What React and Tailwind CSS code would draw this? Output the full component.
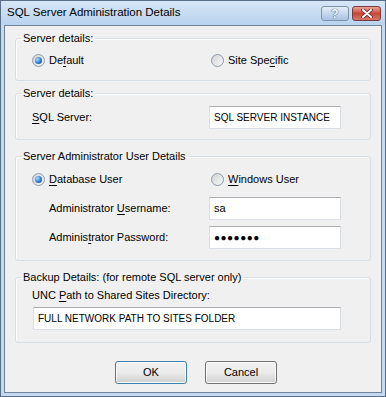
import React from "react";

const font = { fontFamily: "'Liberation Sans', Arial, sans-serif" };

// Vista-style radio button
const Radio = ({ checked }) => (
  <span className="relative inline-flex w-[13px] h-[13px] rounded-full border border-[#8d9aa8] bg-gradient-to-br from-[#d0d4d9] to-[#f7f7f7] items-center justify-center shrink-0">
    {checked && (
      <span className="w-[7px] h-[7px] rounded-full bg-[radial-gradient(circle_at_35%_35%,#b4dcff,#2a7ad4_55%,#0b3c8a)]" />
    )}
  </span>
);

const Key = ({ children }) => <span className="underline underline-offset-[2px]">{children}</span>;

const Field = ({ value, className = "" }) => (
  <div className={`h-[23px] shrink-0 overflow-hidden whitespace-nowrap bg-white border border-[#dadfe5] border-t-[#abadb3] flex items-center pl-[4px] text-black ${className}`}>
    {value}
  </div>
);

const Group = ({ label, className = "", children }) => (
  <fieldset className={`mx-[10px] border border-[#d5dfe5] rounded-[3px] shadow-[inset_1px_1px_0_#ffffff] ${className}`}>
    <legend className="ml-[5px] px-[2px] leading-[16px] text-black">{label}</legend>
    {children}
  </fieldset>
);

const Button = ({ children, focused }) => (
  <button
    className={`w-[72px] h-[23px] rounded-[3px] border text-[11px] text-black bg-gradient-to-b from-[#f2f2f2] via-[#ebebeb] to-[#cfcfcf] shadow-[inset_0_0_0_1px_#fcfcfc] ${focused ? "border-[#3c7fb1]" : "border-[#707070]"}`}
  >
    {children}
  </button>
);

export default function App() {
  return (
    <div className="w-[386px] h-[397px] bg-[#c4daf1] border border-[#5a6f87] flex flex-col text-[11px]" style={font}>
      {/* Title bar */}
      <div className="h-[24px] flex items-center justify-between pl-[6px] pr-[4px] bg-gradient-to-b from-[#d6e6f7] to-[#b9d3ee]">
        <span className="text-[11.5px] text-black">SQL Server Administration Details</span>
        <div className="flex items-center gap-[3px] pt-[1px]">
          <div className="w-[28px] h-[15px] rounded-[3px] border border-[#7d92ab] bg-gradient-to-b from-[#e4eefa] to-[#a9c3e2] flex items-center justify-center">
            <span className="text-white font-bold text-[12px] leading-none [text-shadow:0_0_1px_#3b4b60,0_0_1px_#3b4b60]">?</span>
          </div>
          <div className="w-[29px] h-[15px] rounded-[3px] border border-[#7a3a3a] bg-gradient-to-b from-[#e5a597] via-[#c9463a] to-[#d2786a] flex items-center justify-center">
            <svg width="12" height="9" viewBox="0 0 12 9">
              <path d="M2 1 L10 8 M10 1 L2 8" stroke="#5a1a14" strokeWidth="3.4" strokeLinecap="round" />
              <path d="M2 1 L10 8 M10 1 L2 8" stroke="#ffffff" strokeWidth="2" strokeLinecap="round" />
            </svg>
          </div>
        </div>
      </div>

      {/* Client area */}
      <div className="flex-1 mx-[3px] mb-[3px] bg-[#f0f0f0] border border-[#6f8298] flex flex-col pt-[4px]">
        <Group label="Server details:" className="h-[51px]">
          <div className="flex items-center pt-[6px]">
            <div className="w-[195px] flex items-center gap-[4px] pl-[16px]">
              <Radio checked />
              <span>De<Key>f</Key>ault</span>
            </div>
            <div className="flex items-center gap-[4px]">
              <Radio />
              <span>Site Spe<Key>c</Key>ific</span>
            </div>
          </div>
        </Group>

        <Group label="Server details:" className="mt-[4px] h-[55px]">
          <div className="flex items-center pt-[5px]">
            <span className="w-[193px] shrink-0 pl-[16px]"><Key>S</Key>QL Server:</span>
            <Field value="SQL SERVER INSTANCE" className="w-[132px] text-[10px]" />
          </div>
        </Group>

        <Group label="Server Administrator User Details" className="mt-[8px] h-[113px]">
          <div className="flex items-center pt-[7px]">
            <div className="w-[195px] flex items-center gap-[4px] pl-[16px]">
              <Radio checked />
              <span><Key>D</Key>atabase User</span>
            </div>
            <div className="flex items-center gap-[4px]">
              <Radio />
              <span><Key>W</Key>indows User</span>
            </div>
          </div>
          <div className="flex items-center mt-[9px]">
            <span className="w-[193px] shrink-0 pl-[33px]">Administrator <Key>U</Key>sername:</span>
            <Field value="sa" className="w-[132px] text-[11px]" />
          </div>
          <div className="flex items-center mt-[6px]">
            <span className="w-[193px] shrink-0 pl-[33px]">Adminis<Key>t</Key>rator Password:</span>
            <Field value={<span className="tracking-[0.5px] text-[10px]">●●●●●●●</span>} className="w-[132px]" />
          </div>
        </Group>

        <Group label="Backup Details: (for remote SQL server only)" className="mt-[8px] h-[74px]">
          <div className="pl-[16px] pt-[2px]">
            UNC <Key>P</Key>ath to Shared Sites Directory:
          </div>
          <Field value="FULL NETWORK PATH TO SITES FOLDER" className="ml-[17px] mt-[3px] w-[308px] text-[10px]" />
        </Group>

        <div className="flex justify-center gap-[18px] mt-[18px] pl-[6px]">
          <Button focused>OK</Button>
          <Button>Cancel</Button>
        </div>
      </div>
    </div>
  );
}
